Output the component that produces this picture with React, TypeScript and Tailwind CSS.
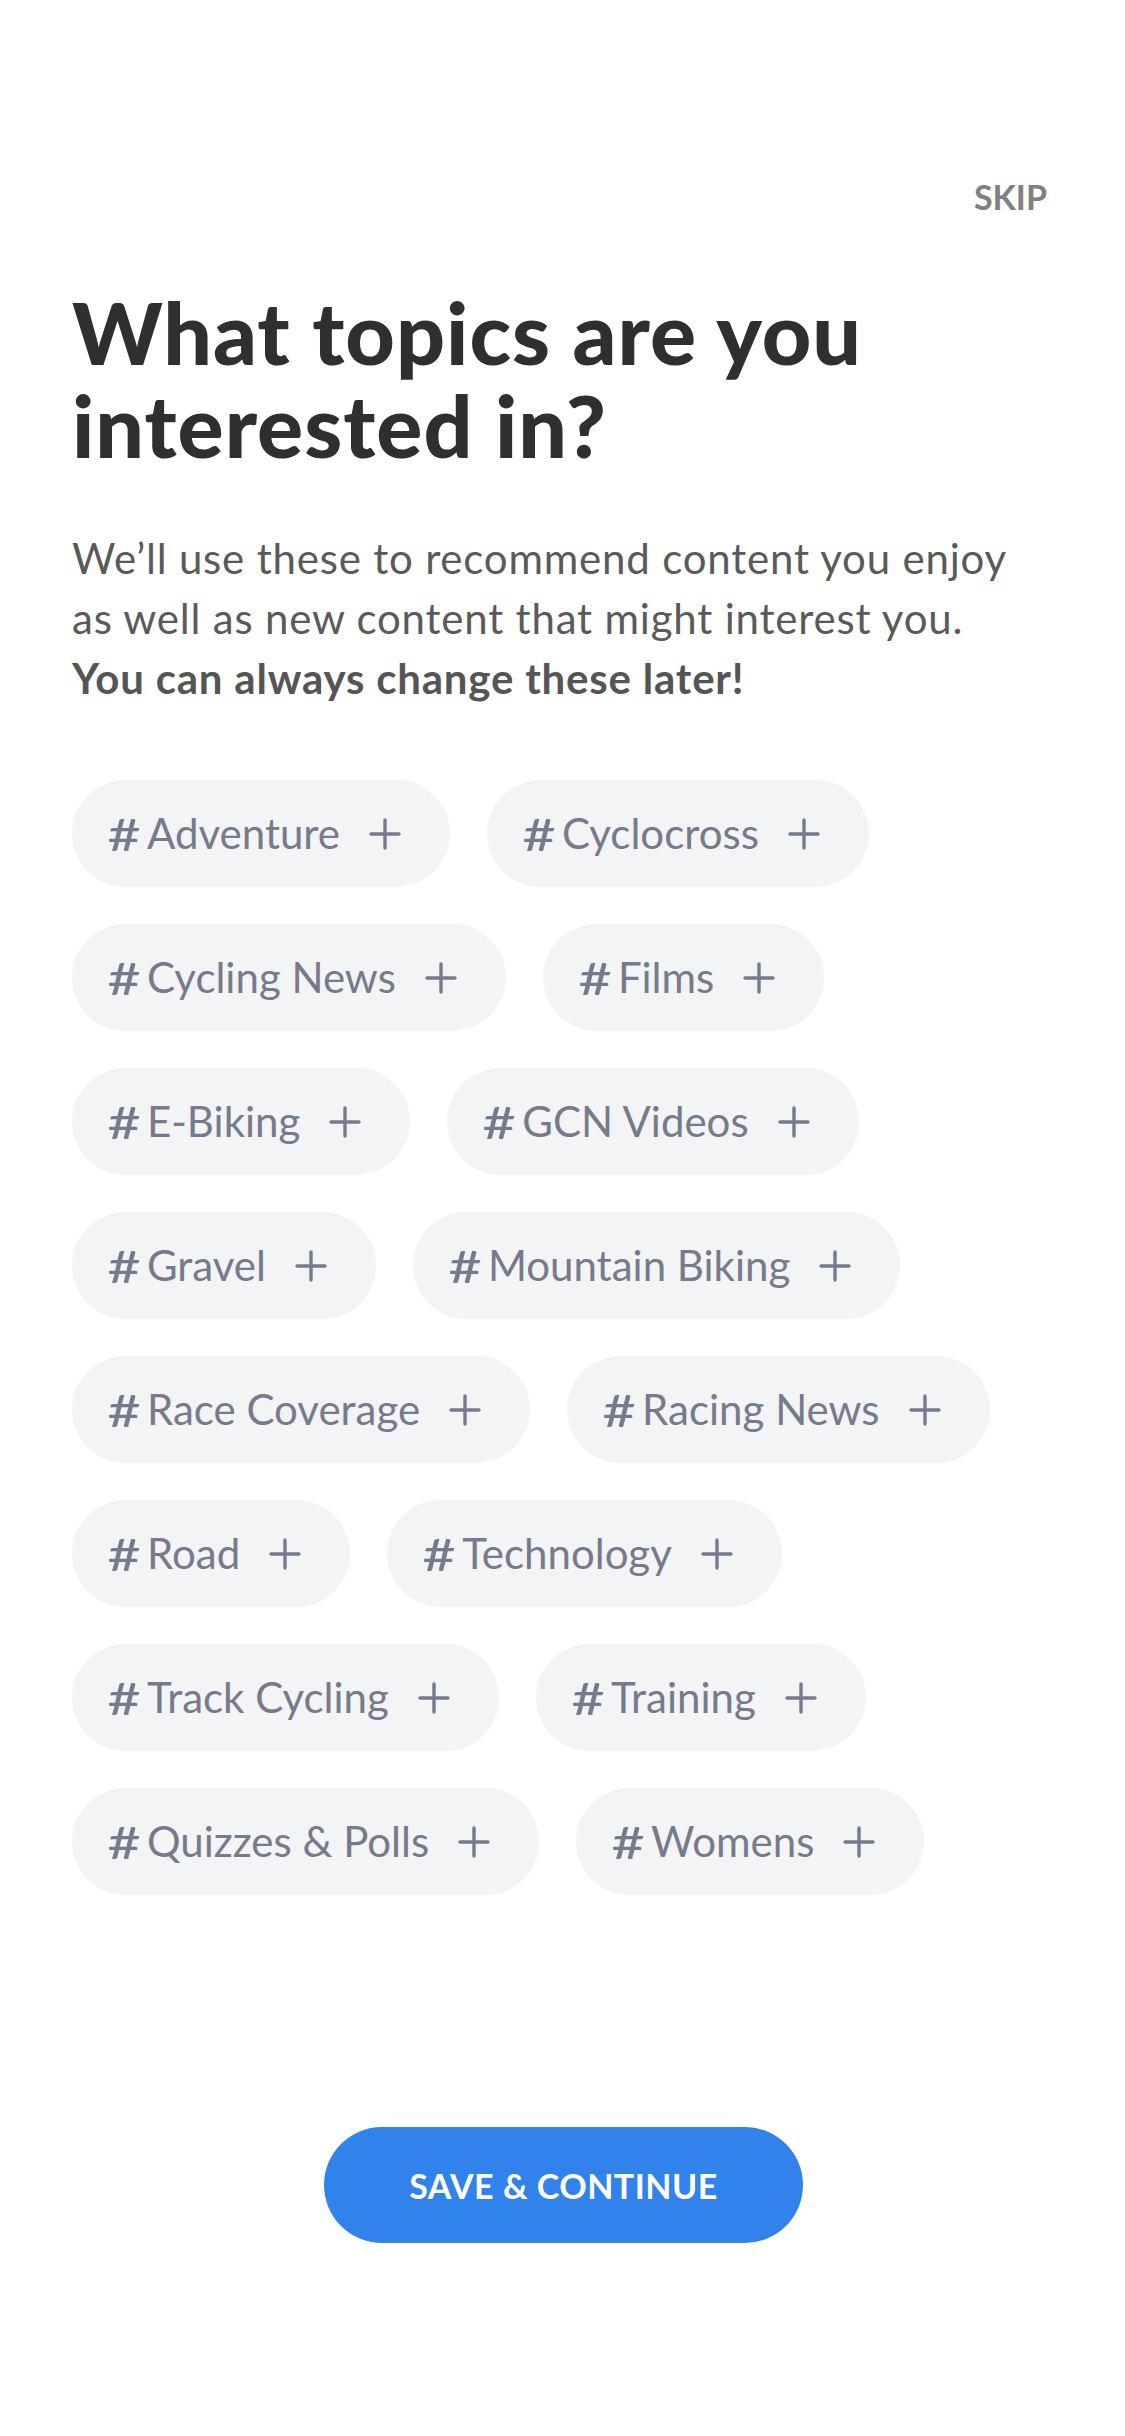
import React from "react";

const topics: string[] = [
  "Adventure",
  "Cyclocross",
  "Cycling News",
  "Films",
  "E-Biking",
  "GCN Videos",
  "Gravel",
  "Mountain Biking",
  "Race Coverage",
  "Racing News",
  "Road",
  "Technology",
  "Track Cycling",
  "Training",
  "Quizzes & Polls",
  "Womens",
];

const PlusIcon = () => (
  <svg width="32" height="32" viewBox="0 0 32 32" fill="none">
    <path
      d="M16 2v28M2 16h28"
      stroke="#767a8a"
      strokeWidth="3.4"
      strokeLinecap="round"
    />
  </svg>
);

const TopicChip: React.FC<{ label: string }> = ({ label }) => {
  return (
    <button className="flex h-[107px] items-center rounded-full bg-[#f3f4f6] pl-[36px] pr-[49px] text-[42px] text-[#767a8a]">
      <span className="mr-[7px] inline-block w-[32px] scale-x-[1.3] text-center text-[44px] font-medium">
        #
      </span>
      <span>{label}</span>
      <span className="ml-[29px] flex">
        <PlusIcon />
      </span>
    </button>
  );
};

export default function App() {
  return (
    <div
      className="flex min-h-[2436px] w-[1125px] flex-col bg-white"
      style={{ fontFamily: "Lato, 'Open Sans', sans-serif" }}
    >
      {/* top bar */}
      <div className="flex justify-end pr-[78px] pt-[177px]">
        <span className="text-[34px] font-bold leading-[40px] text-[#808080]">
          SKIP
        </span>
      </div>

      <div className="px-[72px]">
        <h1 className="mt-[68px] w-[920px] text-[86px] font-black leading-[93px] tracking-[1px] text-[#2f2f2f]">
          What topics are you interested in?
        </h1>
        <p className="mt-[57px] w-[975px] text-[42px] leading-[60px] tracking-[0.8px] text-[#5a5a5a]">
          We’ll use these to recommend content you enjoy as well as new content
          that might interest you.
          <br />
          <span className="font-bold text-[#555555]">
            You can always change these later!
          </span>
        </p>

        {/* topics */}
        <div className="mt-[72px] flex w-[981px] flex-wrap gap-[37px]">
          {topics.map((t) => (
            <TopicChip key={t} label={t} />
          ))}
        </div>
      </div>

      <div className="mt-[232px] flex justify-center pl-[2px]">
        <button className="flex h-[116px] w-[479px] items-center justify-center rounded-full bg-[#3182ea] text-[34px] font-bold tracking-[0.5px] text-white">
          SAVE &amp; CONTINUE
        </button>
      </div>
    </div>
  );
}
